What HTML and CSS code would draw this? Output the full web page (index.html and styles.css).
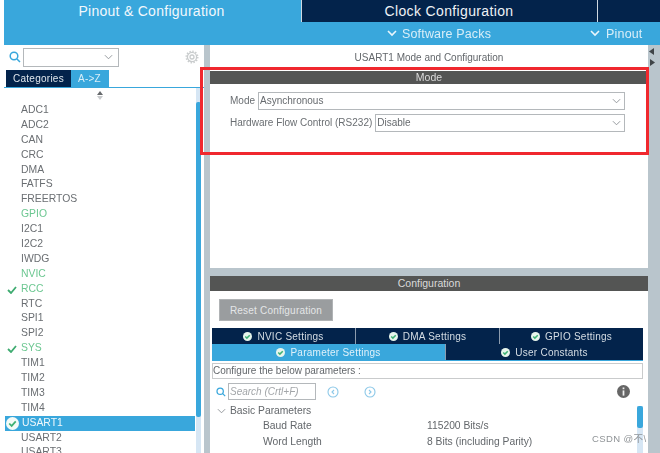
FILE: index.html
```html
<!DOCTYPE html>
<html lang="en">
<head>
<meta charset="utf-8">
<title>USART1 Mode and Configuration</title>
<link rel="stylesheet" href="styles.css">
</head>
<body>
<div class="app">
  <header class="header">
    <div class="tab-main">Pinout &amp; Configuration</div>
    <div class="header-right">
      <div class="nav-top">
        <div class="nav-clock">Clock Configuration</div>
        <div class="nav-last"></div>
      </div>
      <div class="nav-sub">
        <span class="nav-link soft"><svg class="chev" viewBox="0 0 10 7"><path d="M1 1l4 4 4-4"/></svg>Software Packs</span>
        <span class="nav-link pin"><svg class="chev" viewBox="0 0 10 7"><path d="M1 1l4 4 4-4"/></svg>Pinout</span>
      </div>
    </div>
  </header>
  <main class="main">
    <aside class="side">
      <div class="search-row">
        <svg class="mag" viewBox="0 0 12 12"><circle cx="5" cy="5" r="3.8"/><path d="M8 8l3 3"/></svg>
        <div class="combo"><svg class="combo-chev" viewBox="0 0 10 6"><path d="M1 1l4 4 4-4"/></svg></div>
        <svg class="gear" viewBox="0 0 14 14"><circle cx="7" cy="7" r="4.6"/><circle cx="7" cy="7" r="2"/><circle class="teeth" cx="7" cy="7" r="5.8"/></svg>
      </div>
      <div class="side-tabs">
        <div class="st st-dark">Categories</div>
        <div class="st st-on">A-&gt;Z</div>
      </div>
      <div class="list-wrap">
        <div class="sort"><svg viewBox="0 0 6 9"><path d="M3 0l3 4H0z"/><path class="sort-low" d="M3 9L0 5h6z"/></svg></div>
        <ul class="list">
          <li>ADC1</li><li>ADC2</li><li>CAN</li><li>CRC</li><li>DMA</li><li>FATFS</li><li>FREERTOS</li>
          <li class="green">GPIO</li><li>I2C1</li><li>I2C2</li><li>IWDG</li><li class="green">NVIC</li>
          <li class="green"><svg class="tick" viewBox="0 0 10 8"><path d="M1 4l3 3 5-6"/></svg>RCC</li>
          <li>RTC</li><li>SPI1</li><li>SPI2</li>
          <li class="green"><svg class="tick" viewBox="0 0 10 8"><path d="M1 4l3 3 5-6"/></svg>SYS</li>
          <li>TIM1</li><li>TIM2</li><li>TIM3</li><li>TIM4</li>
          <li class="sel"><svg class="okbig" viewBox="0 0 12 12"><circle cx="6" cy="6" r="6"/><path d="M3 6l2.2 2.2L9 4"/></svg>USART1</li>
          <li>USART2</li><li>USART3</li>
        </ul>
        <div class="track"><div class="thumb"></div></div>
      </div>
    </aside>
    <div class="gutter"></div>
    <section class="center">
      <div class="title">USART1 Mode and Configuration</div>
      <div class="bar">Mode</div>
      <div class="mode-body">
        <div class="field"><label>Mode</label><div class="select"><span>Asynchronous</span><svg class="combo-chev" viewBox="0 0 10 6"><path d="M1 1l4 4 4-4"/></svg></div></div>
        <div class="field"><label>Hardware Flow Control (RS232)</label><div class="select"><span>Disable</span><svg class="combo-chev" viewBox="0 0 10 6"><path d="M1 1l4 4 4-4"/></svg></div></div>
      </div>
      <div class="split"></div>
      <div class="bar bar-config">Configuration</div>
      <div class="config">
        <button class="reset">Reset Configuration</button>
        <div class="tabs tabs-a">
          <div class="t"><svg class="ok" viewBox="0 0 10 10"><circle cx="5" cy="5" r="5"/><path d="M2.5 5l1.8 1.8L7.5 3.5"/></svg>NVIC Settings</div>
          <div class="t"><svg class="ok" viewBox="0 0 10 10"><circle cx="5" cy="5" r="5"/><path d="M2.5 5l1.8 1.8L7.5 3.5"/></svg>DMA Settings</div>
          <div class="t"><svg class="ok" viewBox="0 0 10 10"><circle cx="5" cy="5" r="5"/><path d="M2.5 5l1.8 1.8L7.5 3.5"/></svg>GPIO Settings</div>
        </div>
        <div class="tabs tabs-b">
          <div class="t t-on"><svg class="ok" viewBox="0 0 10 10"><circle cx="5" cy="5" r="5"/><path d="M2.5 5l1.8 1.8L7.5 3.5"/></svg>Parameter Settings</div>
          <div class="t"><svg class="ok" viewBox="0 0 10 10"><circle cx="5" cy="5" r="5"/><path d="M2.5 5l1.8 1.8L7.5 3.5"/></svg>User Constants</div>
        </div>
        <div class="hint">Configure the below parameters :</div>
        <div class="tools">
          <svg class="mag small" viewBox="0 0 12 12"><circle cx="5" cy="5" r="3.8"/><path d="M8 8l3 3"/></svg>
          <div class="search">Search (Crtl+F)</div>
          <svg class="nav-btn first" viewBox="0 0 12 12"><circle cx="6" cy="6" r="5"/><path d="M7 4L5 6l2 2"/></svg>
          <svg class="nav-btn second" viewBox="0 0 12 12"><circle cx="6" cy="6" r="5"/><path d="M5 4l2 2-2 2"/></svg>
          <svg class="info" viewBox="0 0 12 12"><circle cx="6" cy="6" r="6"/><rect x="5.2" y="2.3" width="1.6" height="1.6"/><rect x="5.2" y="5" width="1.6" height="4.8"/></svg>
        </div>
        <div class="params">
          <div class="group"><svg class="combo-chev" viewBox="0 0 10 6"><path d="M1 1l4 4 4-4"/></svg>Basic Parameters</div>
          <div class="param"><span>Baud Rate</span><span>115200 Bits/s</span></div>
          <div class="param"><span>Word Length</span><span>8 Bits (including Parity)</span></div>
          <div class="ptrack"><div class="pthumb"></div></div>
        </div>
      </div>
    </section>
    <div class="edge">
      <svg viewBox="0 0 6 18"><path d="M5 0v7L0 3.5z"/><path d="M1 11v7l5-3.5z"/></svg>
    </div>
  </main>
  <div class="redbox"></div>
  <div class="mark">CSDN @不\</div>
</div>
</body>
</html>
```
FILE: styles.css
```css
* { box-sizing: border-box; }
html, body { margin: 0; padding: 0; }
body { width: 660px; height: 453px; overflow: hidden; background: #fff; font-family: "Liberation Sans", Arial, sans-serif; }
svg { display: block; flex: none; }
.app { position: relative; width: 660px; height: 453px; overflow: hidden; filter: blur(0.5px); }

.header { display: flex; height: 45px; padding-left: 4px; }
.tab-main { width: 297px; background: #39a7dc; color: #f2f8fc; font-size: 14px; text-align: center; padding: 3px 2px 0 0; line-height: 17px; letter-spacing: 0.28px; }
.header-right { flex: 1; display: flex; flex-direction: column; }
.nav-top { display: flex; height: 22px; background: #03234b; color: #eef2f6; font-size: 14px; line-height: 22px; border-left: 1px solid #cfd8e0; }
.nav-clock { width: 296px; padding-right: 1px; text-align: center; border-right: 1px solid #cfd8e0; letter-spacing: 0.36px; }
.nav-last { flex: 1; }
.nav-sub { flex: 1; background: #39a7dc; color: #d9eef8; font-size: 12.5px; position: relative; display: flex; align-items: center; padding-left: 86px; letter-spacing: 0.16px; }
.nav-link { display: flex; align-items: center; gap: 5px; }
.nav-link.pin { margin-left: 99px; gap: 6px; }
.chev { width: 10px; height: 7px; fill: none; stroke: #eaf6fc; stroke-width: 1.6; }

.main { display: flex; height: 408px; }
.side { width: 204px; padding-left: 4px; display: flex; flex-direction: column; }
.search-row { height: 25px; display: flex; align-items: center; padding: 0 0 1px 5px; }
.mag { width: 12px; height: 12px; fill: none; stroke: #39a7dc; stroke-width: 1.5; }
.combo { width: 96px; height: 19px; margin-left: 2px; border: 1px solid #b4b8bb; display: flex; align-items: center; justify-content: flex-end; padding-right: 5px; }
.combo-chev { width: 9px; height: 6px; fill: none; stroke: #8b9094; stroke-width: 1; }
.gear { width: 14px; height: 14px; margin-left: 66px; fill: none; stroke: #c9cccd; stroke-width: 1.3; }
.gear .teeth { stroke-dasharray: 1.4 1.6; stroke-width: 1.4; }

.side-tabs { height: 18px; display: flex; padding-left: 2px; border-bottom: 1px solid #39a7dc; font-size: 10px; line-height: 17px; letter-spacing: 0.25px; }
.st { text-align: center; }
.st-dark { width: 65px; background: #03234b; color: #dfe6ec; }
.st-on { width: 38px; background: #39a7dc; color: #d9eef8; padding-right: 1px; }

.list-wrap { position: relative; flex: 1; overflow: hidden; }
.sort { height: 15px; display: flex; justify-content: center; padding: 3px 8px 0 0; }
.sort svg { width: 6px; height: 9px; fill: #66696c; }
.sort .sort-low { fill: #c8cacc; }
.list { list-style: none; margin: 0; padding: 0 0 0 1px; font-size: 10.4px; color: #6a6e72; width: 191px; }
.list li { position: relative; height: 14.9px; line-height: 14.9px; padding-left: 16px; }
.list .green { color: #6cc791; }
.list .sel { background: #39a7dc; color: #f0f8fc; padding-left: 17px; }
.tick { position: absolute; left: 2px; top: 4px; width: 10px; height: 8px; fill: none; stroke: #3eab70; stroke-width: 1.8; }
.okbig { position: absolute; left: 1px; top: 1px; width: 13px; height: 13px; fill: #f4fbf7; }
.okbig path { fill: none; stroke: #3eb174; stroke-width: 1.6; }
.track { position: absolute; left: 192px; top: 0; bottom: 0; width: 5px; background: #d6e6f4; }
.thumb { position: absolute; left: 0; top: 14px; width: 5px; height: 315px; background: #39a7dc; border-radius: 2px; }

.gutter { width: 6px; background: #b9c5cc; }
.center { width: 438px; display: flex; flex-direction: column; }
.title { height: 26px; text-align: center; font-size: 10px; line-height: 25px; color: #63676b; }
.bar { height: 13px; background: #545554; color: #dadada; font-size: 10.5px; line-height: 13px; text-align: center; }
.mode-body { padding: 8px 23px 0 20px; display: flex; flex-direction: column; gap: 5px; height: 184px; }
.field { display: flex; align-items: center; gap: 3px; height: 17px; font-size: 10px; color: #6a6e72; }
.select { flex: 1; height: 18px; border: 1px solid #b4b8bb; display: flex; align-items: center; justify-content: space-between; padding: 0 3px 0 1px; color: #666a6e; }
.split { height: 8px; background: #b9c5cc; }
.bar-config { height: 15px; line-height: 15px; }
.config { flex: 1; padding: 8px 5px 0 2px; display: flex; flex-direction: column; position: relative; }
.reset { width: 114px; height: 22px; margin-left: 7px; border: 1px solid #b0b3b5; background: #9a9d9f; color: #e4e6e7; font: 10px "Liberation Sans", Arial, sans-serif; letter-spacing: 0.2px; padding: 0; flex: none; }
.tabs { display: flex; height: 16px; font-size: 10px; letter-spacing: 0.25px; color: #d5dde4; }
.tabs-a { margin-top: 7px; }
.t { flex: 1; background: #03234b; display: flex; align-items: center; justify-content: center; gap: 5px; border-left: 1px solid #8d9cae; }
.t:first-child { border-left: 0; }
.t-on { background: #39a7dc; color: #dff1fa; }
.tabs-b { border-bottom: 1px solid #39a7dc; height: 17px; }
.tabs-b .t-on { flex: 0 0 233px; }
.ok { width: 9px; height: 9px; fill: #e7f5ec; }
.ok path { fill: none; stroke: #3eb174; stroke-width: 1.6; }
.hint { height: 16px; margin-top: 2px; border: 1px solid #c9cbcc; font-size: 10px; line-height: 14px; color: #63676b; }
.tools { display: flex; align-items: center; height: 24px; padding: 1px 0 0 4px; flex: none; }
.mag.small { width: 10px; height: 10px; }
.search { width: 88px; height: 17px; margin-left: 2px; border: 1px solid #b4b8bb; font-size: 10px; line-height: 15px; font-style: italic; color: #a3a6a9; padding-left: 1px; }
.nav-btn { width: 12px; height: 12px; fill: none; stroke: #8cc8e8; stroke-width: 1.1; }
.nav-btn.first { margin-left: 11px; }
.nav-btn.second { margin-left: 25px; }
.info { width: 13px; height: 13px; margin-left: 241px; fill: #666; }
.info rect { fill: #eee; }
.params { position: relative; flex: 1; font-size: 10.3px; color: #63676b; }
.group { display: flex; align-items: center; gap: 4px; height: 15px; padding-left: 5px; }
.param { display: flex; height: 16px; line-height: 16px; padding-left: 51px; }
.param span:first-child { width: 164px; }
.ptrack { position: absolute; right: 0; top: 3px; bottom: 0; width: 6px; background: #d6e6f4; }
.pthumb { width: 6px; height: 22px; background: #39a7dc; border-radius: 2px; }

.edge { flex: 1; background: #b9c5cc; padding: 3px 0 0 1px; }
.edge svg { width: 6px; height: 18px; fill: #3f4447; }

.redbox { position: absolute; left: 200px; top: 67px; width: 449px; height: 88px; border: 3px solid #f0282e; }
.mark { position: absolute; left: 592px; top: 431px; font: 9.5px "Liberation Sans", "Noto Sans CJK SC", sans-serif; letter-spacing: 0.4px; color: #8f9396; }
```
